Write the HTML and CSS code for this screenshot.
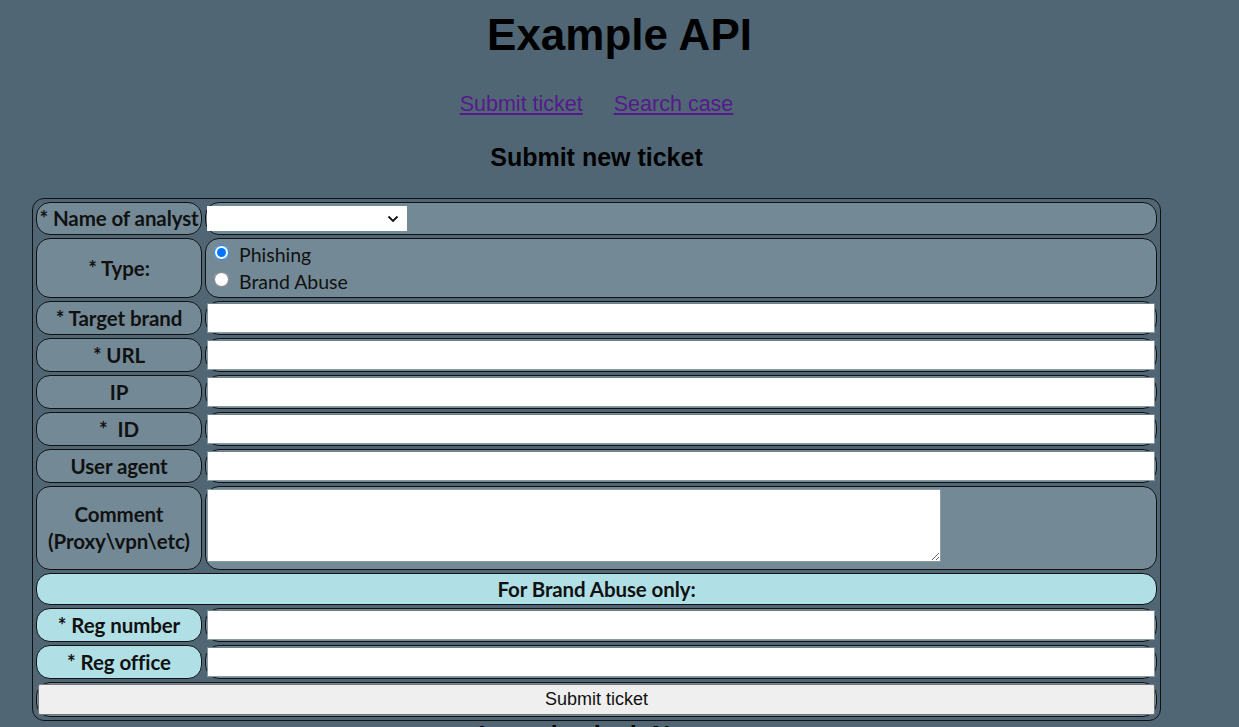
FILE: index.html
```html
<!DOCTYPE html>
<html lang="en">
<head>
<meta charset="utf-8">
<title>Example API</title>
<link rel="stylesheet" href="styles.css">
</head>
<body>
<h1 class="title">Example API</h1>
<main class="content">
  <nav class="nav">
    <a href="#" class="nav-link">Submit ticket</a>
    <a href="#" class="nav-link">Search case</a>
  </nav>
  <h3 class="subtitle">Submit new ticket</h3>
  <form class="ticket-form">
    <table class="form-table">
      <tr class="row row-short">
        <td class="label">* Name of analyst</td>
        <td class="field field-pad">
          <div class="select-wrap">
            <select class="analyst-select"><option></option></select>
            <svg class="select-chevron" width="12" height="8" viewBox="0 0 12 8"><path d="M1.5 1.5 L6 6 L10.5 1.5" fill="none" stroke="#111" stroke-width="1.8"/></svg>
          </div>
        </td>
      </tr>
      <tr class="row row-type">
        <td class="label">* Type:</td>
        <td class="field field-radio">
          <label class="radio-line"><input type="radio" name="type" checked> Phishing</label>
          <label class="radio-line"><input type="radio" name="type"> Brand Abuse</label>
        </td>
      </tr>
      <tr class="row">
        <td class="label">* Target brand</td>
        <td class="field"><input type="text" class="text-input"></td>
      </tr>
      <tr class="row">
        <td class="label">* URL</td>
        <td class="field"><input type="text" class="text-input"></td>
      </tr>
      <tr class="row">
        <td class="label">IP</td>
        <td class="field"><input type="text" class="text-input"></td>
      </tr>
      <tr class="row">
        <td class="label">*&nbsp; ID</td>
        <td class="field"><input type="text" class="text-input"></td>
      </tr>
      <tr class="row">
        <td class="label">User agent</td>
        <td class="field"><input type="text" class="text-input"></td>
      </tr>
      <tr class="row row-comment">
        <td class="label">Comment<br>(Proxy\vpn\etc)</td>
        <td class="field field-area"><textarea class="comment-area"></textarea></td>
      </tr>
      <tr class="row row-short">
        <td class="label label-blue band" colspan="2">For Brand Abuse only:</td>
      </tr>
      <tr class="row">
        <td class="label label-blue">* Reg number</td>
        <td class="field"><input type="text" class="text-input"></td>
      </tr>
      <tr class="row">
        <td class="label label-blue">* Reg office</td>
        <td class="field"><input type="text" class="text-input"></td>
      </tr>
      <tr class="row">
        <td class="field" colspan="2"><button type="button" class="submit-btn">Submit ticket</button></td>
      </tr>
    </table>
  </form>
  <h3 class="status">Last checked: None</h3>
</main>
</body>
</html>
```

FILE: styles.css
```css
html, body {
  background: #506674;
}
body {
  margin: 8px;
  font-family: "Liberation Sans", Arial, sans-serif;
  color: #000;
  overflow: hidden;
}
.title {
  margin: 0;
  font-size: 44px;
  font-weight: bold;
  text-align: center;
  line-height: 53px;
}
.content {
  padding: 0 70px 0 24px;
}
.nav {
  display: flex;
  justify-content: center;
  gap: 31px;
  margin-top: 31px;
  line-height: 25px;
}
.nav-link {
  font-size: 21.5px;
  color: #551a8b;
  text-decoration: underline;
}
.subtitle {
  margin: 26px 0 0;
  text-align: center;
  font-size: 25px;
  line-height: 29px;
}
.ticket-form {
  margin-top: 26px;
}
.form-table {
  width: 100%;
  border-collapse: separate;
  border-spacing: 3px;
  border: 1px solid #111;
  border-radius: 12px;
  font-family: Lato, "Open Sans", sans-serif;
}
.form-table td {
  border: 1px solid #111;
  border-radius: 14px;
  background: #738a96;
  box-sizing: border-box;
  height: 34px;
  padding: 1px;
}
.row-short td { height: 32px; }
.row-type td { height: 59px; }
.row-comment td { height: 84px; }
.label {
  width: 166px;
  text-align: center;
  font-weight: bold;
  font-size: 20.5px;
  line-height: 27px;
  white-space: nowrap;
  color: #111;
  letter-spacing: -0.1px;
}
.label-blue {
  background: #b0e0e6 !important;
}
.band {
  width: auto;
}
.field-pad {
  padding: 3px 1px !important;
}
.select-wrap {
  position: relative;
  width: 200px;
  height: 25px;
}
.analyst-select {
  display: block;
  width: 200px;
  height: 25px;
  border: none;
  background: #fff;
  font-size: 15px;
  appearance: none;
  -webkit-appearance: none;
}
.select-chevron {
  position: absolute;
  right: 8px;
  top: 9px;
  pointer-events: none;
}
.field-radio {
  padding: 2px 6px !important;
  font-size: 19.5px;
  line-height: 27px;
  color: #111;
}
.radio-line {
  display: flex;
  align-items: center;
  gap: 10px;
  height: 27px;
}
.radio-line input {
  margin: 0 0 0 2px;
  width: 15px;
  height: 15px;
  position: relative;
  top: -2px;
}
.text-input {
  display: block;
  width: 100%;
  height: 30px;
  box-sizing: border-box;
  border: 1px solid #8a9aa3;
  border-top-color: #6f7f88;
  background: #fff;
  margin: 0;
}
.field-area {
  vertical-align: top;
  padding: 2px 1px !important;
}
.comment-area {
  display: block;
  width: 734px;
  height: 73px;
  box-sizing: border-box;
  border: 1px solid #8a9aa3;
  background: #fff;
  margin: 0;
  resize: both;
}
.submit-btn {
  display: block;
  width: 100%;
  height: 31px;
  box-sizing: border-box;
  background: #efefef;
  border: 1px solid #767676;
  border-radius: 2px;
  font-family: "Liberation Sans", Arial, sans-serif;
  font-size: 18px;
  color: #111;
}
.status {
  margin: 0;
  text-align: center;
  font-size: 25px;
  line-height: 29px;
}
```
